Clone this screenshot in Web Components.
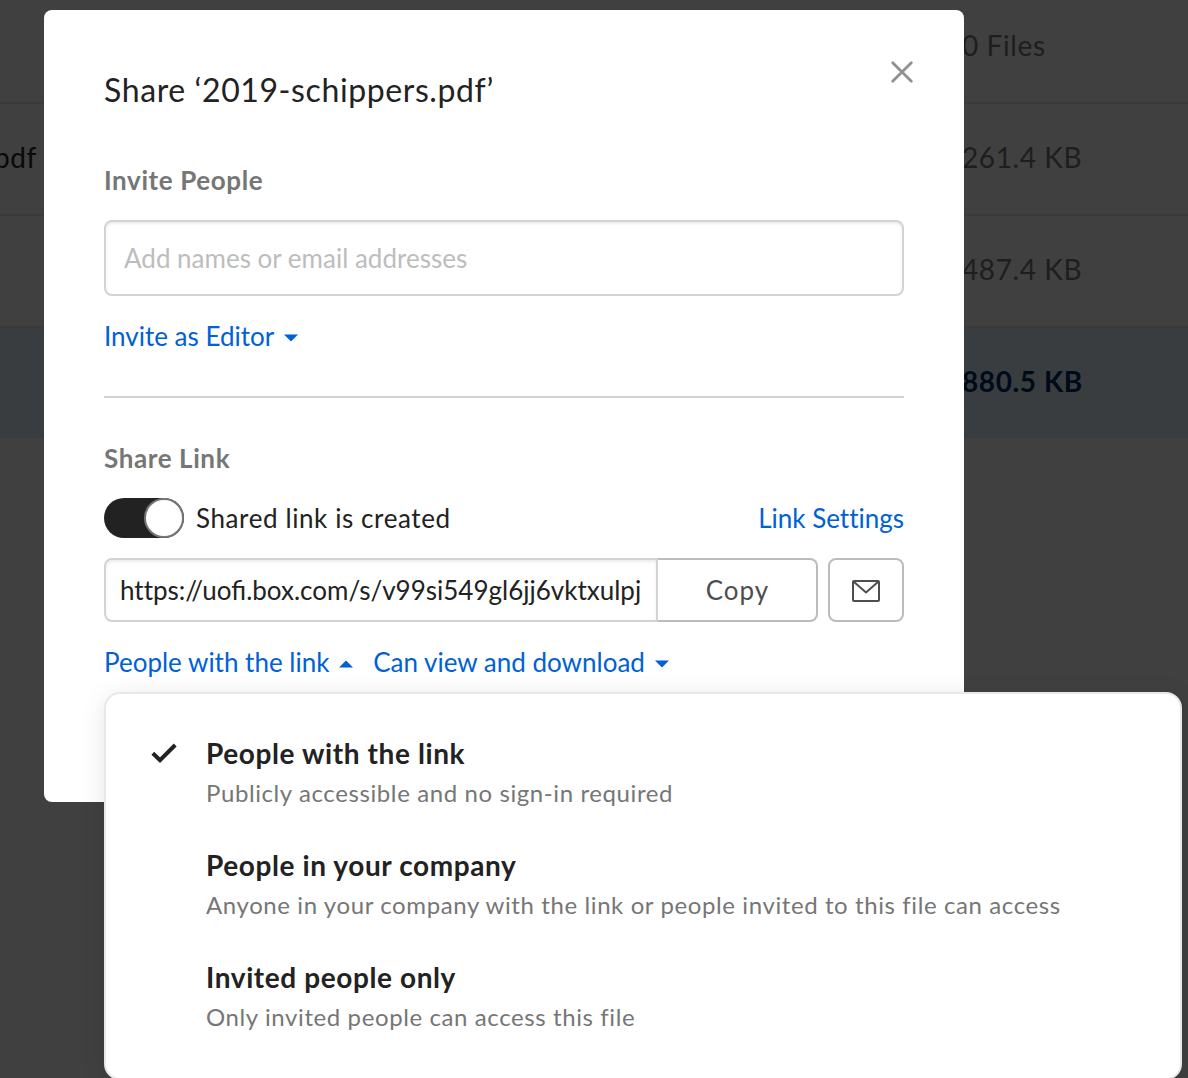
<!DOCTYPE html>
<html lang="en">
<head>
<meta charset="utf-8">
<title>Share file</title>
<style>
html,body{margin:0;height:100%;overflow:hidden;background:#404040}
body{font-family:Lato,"Liberation Sans",sans-serif;font-size:26px;line-height:40px;letter-spacing:.6px;color:#222}
</style>
</head>
<body>
<share-page></share-page>
<script>
const define = (name, html) => customElements.define(name, class extends HTMLElement {
  constructor() {
    super();
    this.attachShadow({ mode: 'open' }).innerHTML = html;
  }
});

define('file-row', `
<style>
:host{display:flex;box-sizing:border-box;height:112px;padding-bottom:4px;border-bottom:2px solid #3a3a3a;align-items:center;font-size:28px;color:#1e1e1e;white-space:nowrap}
:host([head]){height:104px;padding-bottom:12px}
:host([selected]){height:110px;padding-bottom:2px;background:#3a3d40;border-color:#373b42;color:#000a19;font-weight:700}
.name{width:37px;display:flex;justify-content:flex-end;color:#090909}
.size{margin-left:925px}
</style>
<div class="name"><slot name="name"></slot></div><div class="size"><slot></slot></div>`);

define('text-field', `
<style>
:host{display:flex;box-sizing:border-box;align-items:center;border:2px solid #d3d3d3;border-radius:8px;background:#fff;box-shadow:inset 0 2px 3px rgba(0,0,0,.08);letter-spacing:0;white-space:nowrap;overflow:hidden}
</style><div><slot></slot></div>`);

define('drop-link', `
<style>
:host{display:flex;align-items:center;color:#0061d5;letter-spacing:0;white-space:nowrap}
svg{display:block;margin-left:9.8px;margin-top:4px}
:host([open]) svg{transform:scaleY(-1)}
</style><slot></slot><svg width="14" height="8" viewBox="0 0 14 8"><path d="M0 .5h14L7 7.5z" fill="#0061d5"/></svg>`);

define('toggle-switch', `
<style>
:host{display:flex;justify-content:flex-end;width:80px;height:40px;border-radius:20px;background:#222}
i{box-sizing:border-box;width:40px;height:40px;border-radius:50%;background:#fff;border:2px solid #767676}
</style><i></i>`);

define('outline-button', `
<style>
:host{display:flex;box-sizing:border-box;align-items:center;justify-content:center;height:64px;border:2px solid #bcbcbc;border-radius:8px;background:#fff;color:#4e4e4e;letter-spacing:1px}
</style><slot></slot>`);

define('menu-option', `
<style>
:host{display:flex;height:112px;white-space:nowrap}
.mark{width:100px;height:40px;display:flex;align-items:center}
svg{display:none;margin-left:44px}
:host([checked]) svg{display:block}
.title{font-size:28px;font-weight:700;color:#222}
.desc{font-size:24px;color:#767676}
</style>
<div class="mark"><svg width="28" height="22" viewBox="0 0 28 22"><path d="M2.8 11.3 10 18.2 25.2 3" fill="none" stroke="#222" stroke-width="4"/></svg></div>
<div><div class="title"><slot></slot></div><div class="desc"><slot name="desc"></slot></div></div>`);

define('access-menu', `
<style>
:host{display:block;box-sizing:border-box;width:1078px;height:388px;padding-top:39px;background:#fff;border:2px solid #e8e8e8;border-radius:16px;box-shadow:0 4px 24px rgba(0,0,0,.1)}
</style>
<menu-option checked>People with the link<span slot="desc">Publicly accessible and no sign-in required</span></menu-option>
<menu-option>People in your company<span slot="desc">Anyone in your company with the link or people invited to this file can access</span></menu-option>
<menu-option>Invited people only<span slot="desc">Only invited people can access this file</span></menu-option>`);

define('share-dialog', `
<style>
:host{display:flex;flex-direction:column;box-sizing:border-box;width:920px;height:792px;padding:60px;background:#fff;border-radius:8px;white-space:nowrap}
header{display:flex;justify-content:space-between;height:40px;font-size:32px}
header svg{margin:-20px -20px 0 0}
h3{margin:50px 0 20px;font-size:26px;line-height:40px;font-weight:700;color:#767676}
.people{height:76px;padding:0 18px;color:#bdbdbd}
.role{margin-top:20px}
hr{width:100%;height:2px;margin:40px 0 0;border:0;background:#d3d3d3}
h3.link{margin-top:40px}
.row{display:flex;align-items:center}
.status{margin-left:12px;flex:1}
.set{color:#0061d5;letter-spacing:0}
.set,.plain{font-variant-ligatures:none}
.share{margin-top:20px}
.url{width:554px;height:64px;padding:0 14px;border-radius:8px 0 0 8px}
.copy{width:160px;padding-left:1px;border-left:0;border-radius:0 8px 8px 0}
.mail{width:76px;padding-top:2px;margin-left:10px}
.access{margin-top:20px;gap:20px}
</style>
<header><span>Share ‘2019-schippers.pdf’</span>
<svg width="44" height="44" viewBox="0 0 44 44"><path d="M12.7 12.7l18.6 18.6m0-18.6l-18.6 18.6" stroke="#909090" stroke-width="2.8" stroke-linecap="round"/></svg></header>
<h3>Invite People</h3>
<text-field class="people">Add names or email addresses</text-field>
<drop-link class="role">Invite as Editor</drop-link>
<hr>
<h3 class="link">Share Link</h3>
<div class="row"><toggle-switch></toggle-switch><span class="status">Shared link is created</span><span class="set">Link Settings</span></div>
<div class="row share"><text-field class="url"><span class="plain">http</span>s://uofi.box.com/s/v99si549gl6jj6vktxulpj</text-field><outline-button class="copy">Copy</outline-button>
<outline-button class="mail"><svg width="28" height="22" viewBox="0 0 28 22" fill="none" stroke="#4e4e4e" stroke-width="2"><rect x="1" y="1" width="26" height="20" rx="1"/><path d="M1.5 1.5 14 12.5 26.5 1.5"/></svg></outline-button></div>
<div class="row access"><drop-link open>People with the link</drop-link><drop-link>Can view and download</drop-link></div>`);

define('share-page', `
<style>
:host{display:block;position:relative;width:1188px;height:1078px;overflow:hidden}
share-dialog{position:absolute;left:44px;top:10px}
access-menu{position:absolute;left:104px;top:692px}
</style>
<file-row head>0 Files</file-row>
<file-row><span slot="name">pdf</span>261.4 KB</file-row>
<file-row>487.4 KB</file-row>
<file-row selected>880.5 KB</file-row>
<share-dialog></share-dialog>
<access-menu></access-menu>`);
</script>
</body>
</html>
